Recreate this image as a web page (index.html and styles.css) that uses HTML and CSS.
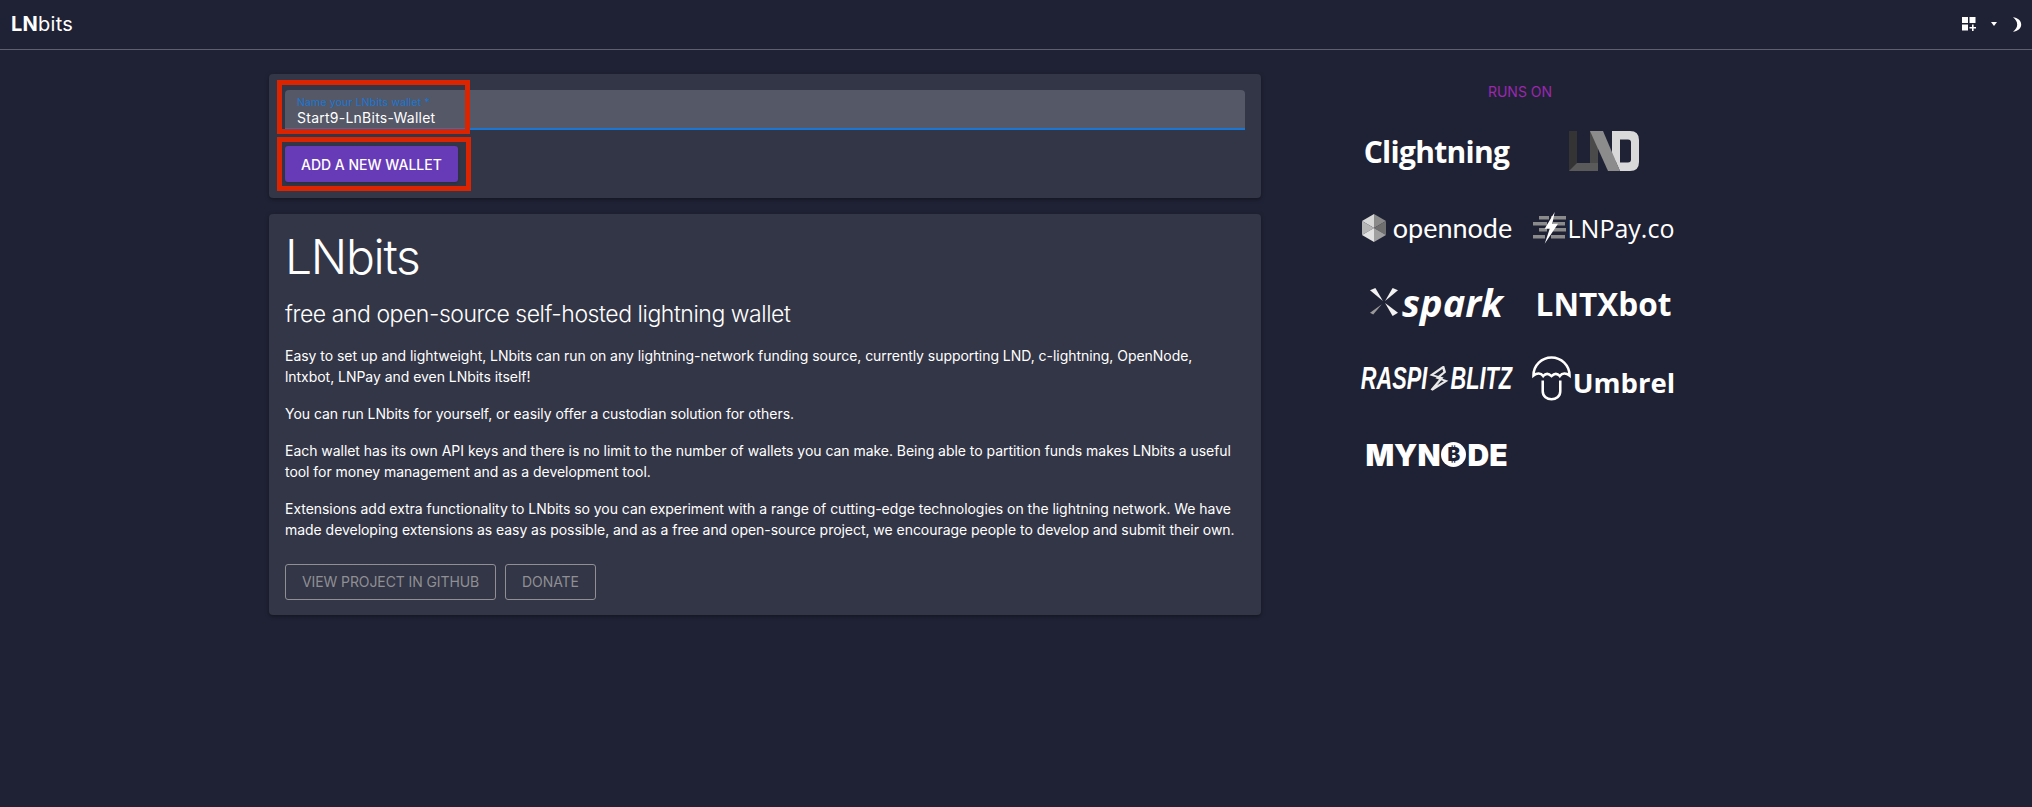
FILE: index.html
```html
<!DOCTYPE html>
<html>
<head>
  <meta charset="utf-8"/>
  <title>LNbits</title>
  <link rel="stylesheet" href="styles.css">
</head>
<body>
<header class="topbar">
  <div class="brand"><strong>LN</strong>bits</div>
  <div class="topbar-actions">
    <svg class="icon-grid" viewBox="0 0 14 14" width="14" height="14">
      <rect x="0" y="0" width="6" height="6"/>
      <rect x="7.5" y="0" width="6" height="6"/>
      <rect x="0" y="7.5" width="6" height="6"/>
      <path d="M10 7.500h1.600v2.400H14v1.600h-2.400V14H10v-2.500H7.500V9.900H10z"/>
    </svg>
    <span class="caret"></span>
    <svg class="icon-moon" viewBox="0 0 10 15" width="10" height="15">
      <path d="M1 0.200C5.500 0.600 9.200 3.500 9.200 7.500S5.500 14.400 1 14.800C3.800 12.600 5.200 10.200 5.200 7.500S3.800 2.400 1 0.200z"/>
    </svg>
  </div>
</header>

<main class="page">
  <section class="content">
    <div class="card new-wallet">
      <div class="marked">
        <label class="field">
          <span class="field-label">Name your LNbits wallet *</span>
          <span class="field-value">Start9-LnBits-Wallet</span>
        </label>
        <span class="mark mark-field"></span>
      </div>
      <div class="marked">
        <button class="btn-add">Add a new wallet</button>
        <span class="mark mark-btn"></span>
      </div>
    </div>

    <div class="card intro">
      <h1>LNbits</h1>
      <h2>free and open-source self-hosted lightning wallet</h2>
      <p>Easy to set up and lightweight, LNbits can run on any lightning-network funding source, currently supporting LND, c-lightning, OpenNode, lntxbot, LNPay and even LNbits itself!</p>
      <p>You can run LNbits for yourself, or easily offer a custodian solution for others.</p>
      <p>Each wallet has its own API keys and there is no limit to the number of wallets you can make. Being able to partition funds makes LNbits a useful tool for money management and as a development tool.</p>
      <p>Extensions add extra functionality to LNbits so you can experiment with a range of cutting-edge technologies on the lightning network. We have made developing extensions as easy as possible, and as a free and open-source project, we encourage people to develop and submit their own.</p>
      <div class="intro-actions">
        <a class="btn-outline">View project in GitHub</a>
        <a class="btn-outline">Donate</a>
      </div>
    </div>
  </section>

  <aside class="runs-on">
    <h6>Runs on</h6>
    <div class="logos">
      <div class="logo logo-clightning">Clightning</div>
      <div class="logo logo-lnd">
        <svg viewBox="0 0 70 41" width="70" height="41">
          <path fill="#343434" d="M0 0h8v40h-8z"/>
          <path fill="#4a4a4a" d="M21 0h8v40h-8z"/>
          <path fill="#5a5a5a" d="M0 40l8-8h21v8z"/>
          <path fill="#a8a8a8" d="M43 0h8v30h-8z"/>
          <path fill="#d9d9d9" d="M43 0h18q9 0 9 9v22q0 9-9 9H51l-8-18zM51 8.500V31.500h8q3 0 3-3V11.500q0-3-3-3z" fill-rule="evenodd"/>
          <path fill="#8c8c8c" d="M21 0h13l17 40H39z"/>
        </svg>
      </div>
      <div class="logo logo-opennode">
        <svg viewBox="0 0 26 28" width="26" height="28">
          <path fill="#d8d8d8" d="M13 0L1 7l12 7z"/>
          <path fill="#8a8a8a" d="M13 0l12 7-12 7z"/>
          <path fill="#b5b5b5" d="M1 7v14l12-7z"/>
          <path fill="#e2e2e2" d="M1 21l12 7V14z"/>
          <path fill="#6f6f6f" d="M25 7v14l-12-7z"/>
          <path fill="#a0a0a0" d="M25 21l-12 7V14z"/>
        </svg>
        <span>opennode</span>
      </div>
      <div class="logo logo-lnpay">
        <svg viewBox="0 0 34 32" width="34" height="32">
          <g fill="#8b8b8b">
            <rect x="6" y="4" width="10" height="3.500"/><rect x="18" y="4" width="15" height="3.500"/>
            <rect x="0" y="10" width="14" height="3.500"/><rect x="20" y="10" width="12" height="3.500"/>
            <rect x="6" y="16" width="8" height="3.500"/><rect x="20" y="16" width="13" height="3.500"/>
            <rect x="0" y="23" width="12" height="3.500"/><rect x="18" y="23" width="14" height="3.500"/>
          </g>
          <path fill="#fff" d="M21.700 0L11.700 16.700h5L11.700 31.700 25 11.700h-5.700z"/>
        </svg>
        <span>LNPay.co</span>
      </div>
      <div class="logo logo-spark">
        <svg viewBox="0 0 26 26" width="28" height="28">
          <g fill="#f2f2f2">
            <path d="M0 2l5-2 7 12z"/>
            <path d="M26 2l-5-2-7 12z"/>
            <path d="M26 23l-5 3-7-12z"/>
          </g>
          <path fill="#9a9a9a" d="M0 23l3 1.500 8-9.500z"/>
        </svg>
        <span>spark</span>
      </div>
      <div class="logo logo-lntxbot">LNTXbot</div>
      <div class="logo logo-raspi">
        <span>RASPI</span>
        <svg viewBox="0 0 16 26" width="34" height="26" preserveAspectRatio="none">
          <path fill="none" stroke="#e8e8e8" stroke-width="1.800" d="M11 1L3 9l7 3-7 12 10-9-6-3 5-6z"/>
        </svg>
        <span>BLITZ</span>
      </div>
      <div class="logo logo-umbrel">
        <svg viewBox="0 0 40 46" width="39" height="45">
          <g fill="none" stroke="#fff" stroke-width="2.600">
            <path d="M1.500 20C1.500 9.500 10 1.500 20 1.500S38.500 9.500 38.500 20c-3.500-3-7.500-3-10 .5-2.500-3-5.500-3-8.500 0-3-3-6-3-8.500 0-2.500-3.500-6.500-3.500-10-.5z"/>
            <path d="M11 25v11c0 11 18 11 18 0V25"/>
          </g>
        </svg>
        <span>Umbrel</span>
      </div>
      <div class="logo logo-mynode">MYN<span class="btc">₿</span>DE</div>
    </div>
  </aside>
</main>
</body>
</html>
```

FILE: styles.css
```css
* {
  box-sizing: border-box;
}

body {
  margin: 0;
  min-height: 807px;
  background: #1f2234;
  color: #fff;
  font-family: 'Inter', 'Liberation Sans', sans-serif;
  font-size: 14px;
  line-height: 21px;
}

.topbar {
  display: flex;
  align-items: center;
  justify-content: space-between;
  height: 50px;
  padding: 0 10px 1px 11px;
  border-bottom: 1px solid #5e6070;
}

.brand {
  font-size: 20px;
  letter-spacing: 0.25px;
}

.brand strong {
  font-weight: 700;
}

.topbar-actions {
  display: flex;
  align-items: center;
}

.topbar-actions svg {
  fill: #fff;
}

.caret {
  margin: 0 15px 0 15px;
  border-left: 3.500px solid transparent;
  border-right: 3.500px solid transparent;
  border-top: 4px solid #fff;
}

.page {
  display: flex;
  padding: 24px 0 0 269px;
}

.content {
  width: 992px;
  display: flex;
  flex-direction: column;
  gap: 16px;
}

.card {
  background: #333646;
  border-radius: 4px;
  padding: 16px;
  box-shadow: 0 1px 5px rgba(0, 0, 0, 0.2), 0 2px 2px rgba(0, 0, 0, 0.14);
}

.new-wallet {
  height: 124px;
}

.marked {
  position: relative;
}

.mark {
  position: absolute;
  border: 5px solid #dd2400;
  pointer-events: none;
}

.mark-field {
  top: -10px;
  left: -8px;
  width: 193px;
  height: 54px;
}

.mark-btn {
  top: -9px;
  left: -8px;
  width: 194px;
  height: 54px;
}

.field {
  display: flex;
  flex-direction: column;
  height: 40px;
  margin-bottom: 16px;
  padding: 7px 12px 0;
  background: #555867;
  border-radius: 4px 4px 0 0;
  border-bottom: 2px solid #1976d2;
}

.field-label {
  font-size: 10.500px;
  line-height: 12px;
  color: #1976d2;
  letter-spacing: 0.15px;
}

.field-value {
  font-size: 14px;
  line-height: 17px;
  letter-spacing: 0.25px;
}

.btn-add {
  display: block;
  height: 36px;
  padding: 0 16px;
  background: #673ab7;
  color: #fff;
  border: 0;
  border-radius: 3px;
  font: 500 14px 'Inter', 'Liberation Sans', sans-serif;
  letter-spacing: 0;
  text-transform: uppercase;
  box-shadow: 0 1px 3px rgba(0, 0, 0, 0.2);
}

.intro {
  height: 401px;
}

h1 {
  margin: 0;
  font-size: 48px;
  font-weight: 300;
  line-height: 54px;
  letter-spacing: -1.3px;
}

h2 {
  margin: 14px 0 15px;
  font-size: 23px;
  font-weight: 300;
  line-height: 32px;
  letter-spacing: -0.45px;
}

p {
  margin: 0 0 16px;
  letter-spacing: -0.04px;
}

.intro-actions {
  display: flex;
  gap: 9px;
  margin-top: 24px;
}

.btn-outline {
  display: block;
  height: 36px;
  padding: 0 16px;
  border: 1px solid #8f8f94;
  border-radius: 3px;
  color: #8f8f94;
  font-weight: 400;
  line-height: 34px;
  letter-spacing: -0.1px;
  text-transform: uppercase;
}

.runs-on {
  width: 334px;
  margin-left: 92px;
  padding-top: 8px;
}

h6 {
  margin: 0 0 12px;
  font-size: 14px;
  font-weight: 400;
  line-height: 20px;
  text-align: center;
  color: #9c27b0;
  text-transform: uppercase;
}

.logos {
  display: grid;
  grid-template-columns: 167px 167px;
  grid-auto-rows: 75.700px;
  align-items: center;
}

.logo {
  display: flex;
  align-items: center;
  justify-content: center;
  color: #fff;
  white-space: nowrap;
}

.logo svg {
  flex: none;
}

.logo-clightning {
  font: 700 30px 'Open Sans', sans-serif;
  letter-spacing: -0.7px;
}

.logo-opennode {
  gap: 6px;
  font: 400 27px 'Lato', sans-serif;
}

.logo-lnpay {
  gap: 1px;
  font: 400 25px 'Open Sans', sans-serif;
}

.logo-spark {
  gap: 4px;
  margin-top: -3px;
  font: italic 700 38px 'Open Sans', sans-serif;
}

.logo-lntxbot {
  font: 700 31.500px 'Open Sans', sans-serif;
}

.logo-raspi {
  font: italic 700 32px 'Liberation Sans', sans-serif;
  transform: scaleX(0.68);
}

.logo-umbrel {
  gap: 2px;
  font: 700 27.500px 'Open Sans', sans-serif;
}

.logo-umbrel span {
  margin-top: 8px;
}

.logo-mynode {
  font: 900 30px 'Inter', sans-serif;
}

.btc {
  display: flex;
  align-items: center;
  justify-content: center;
  width: 25px;
  height: 25px;
  margin: 0 1px;
  border-radius: 50%;
  background: #fff;
  color: #1f2234;
  font-size: 19px;
  letter-spacing: 0;
}
```
